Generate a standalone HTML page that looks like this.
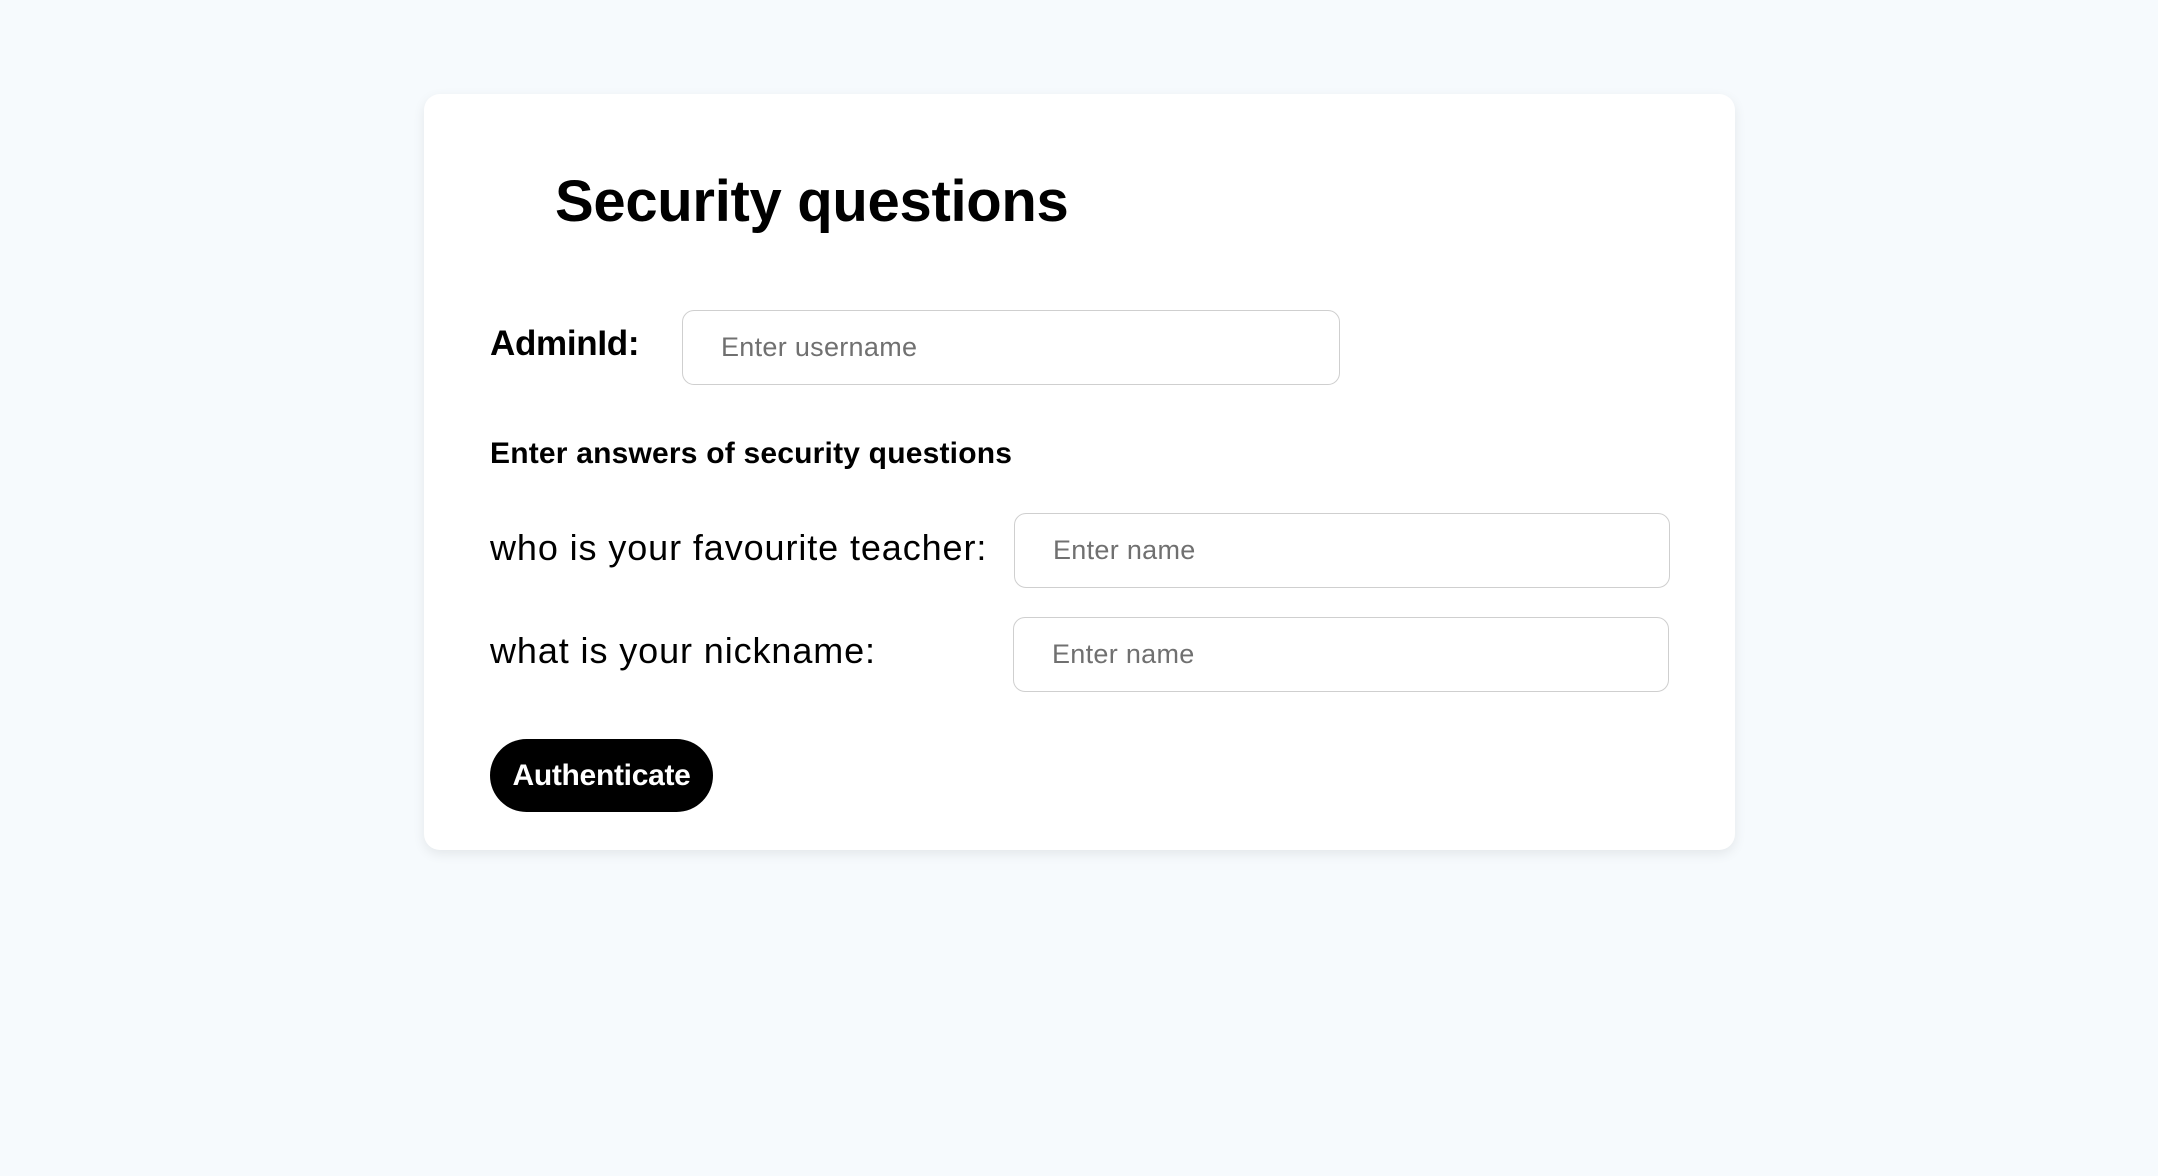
<!DOCTYPE html>
<html><head><style>
html,body{margin:0;padding:0;}
body{width:2158px;height:1176px;background:#f6fafd;font-family:"Liberation Sans",sans-serif;position:relative;overflow:hidden;color:#000;}
.card{position:absolute;left:424px;top:94px;width:1311px;height:756px;background:#fff;border-radius:16px;box-shadow:0 4px 12px rgba(0,0,0,0.08);}
.t{position:absolute;white-space:nowrap;}
.in{position:absolute;border:1.5px solid #cfcfcf;border-radius:12px;box-sizing:border-box;font-size:27px;color:#707070;padding-left:38px;display:flex;align-items:center;background:#fff;letter-spacing:0.3px;}
.btn{position:absolute;left:490px;top:739px;width:223px;height:73px;background:#000;border-radius:37px;color:#fff;font-weight:bold;font-size:30px;display:flex;align-items:center;justify-content:center;letter-spacing:-0.3px;}
</style></head><body>
<div class="card"></div>
<div class="t" style="left:555px;top:166px;font-size:58px;line-height:72px;font-weight:bold;letter-spacing:-0.3px;">Security questions</div>
<div class="t" style="left:490px;top:322px;font-size:35px;line-height:44px;font-weight:bold;letter-spacing:-0.3px;">AdminId:</div>
<div class="in" style="left:682px;top:310px;width:658px;height:75px;">Enter username</div>
<div class="t" style="left:490px;top:435px;font-size:30px;line-height:38px;font-weight:bold;letter-spacing:0.2px;">Enter answers of security questions</div>
<div class="t" style="left:490px;top:526px;font-size:36px;line-height:44px;letter-spacing:0.9px;">who is your favourite teacher:</div>
<div class="in" style="left:1014px;top:513px;width:656px;height:75px;">Enter name</div>
<div class="t" style="left:490px;top:629px;font-size:36px;line-height:44px;letter-spacing:0.9px;">what is your nickname:</div>
<div class="in" style="left:1013px;top:617px;width:656px;height:75px;">Enter name</div>
<div class="btn">Authenticate</div>
</body></html>
